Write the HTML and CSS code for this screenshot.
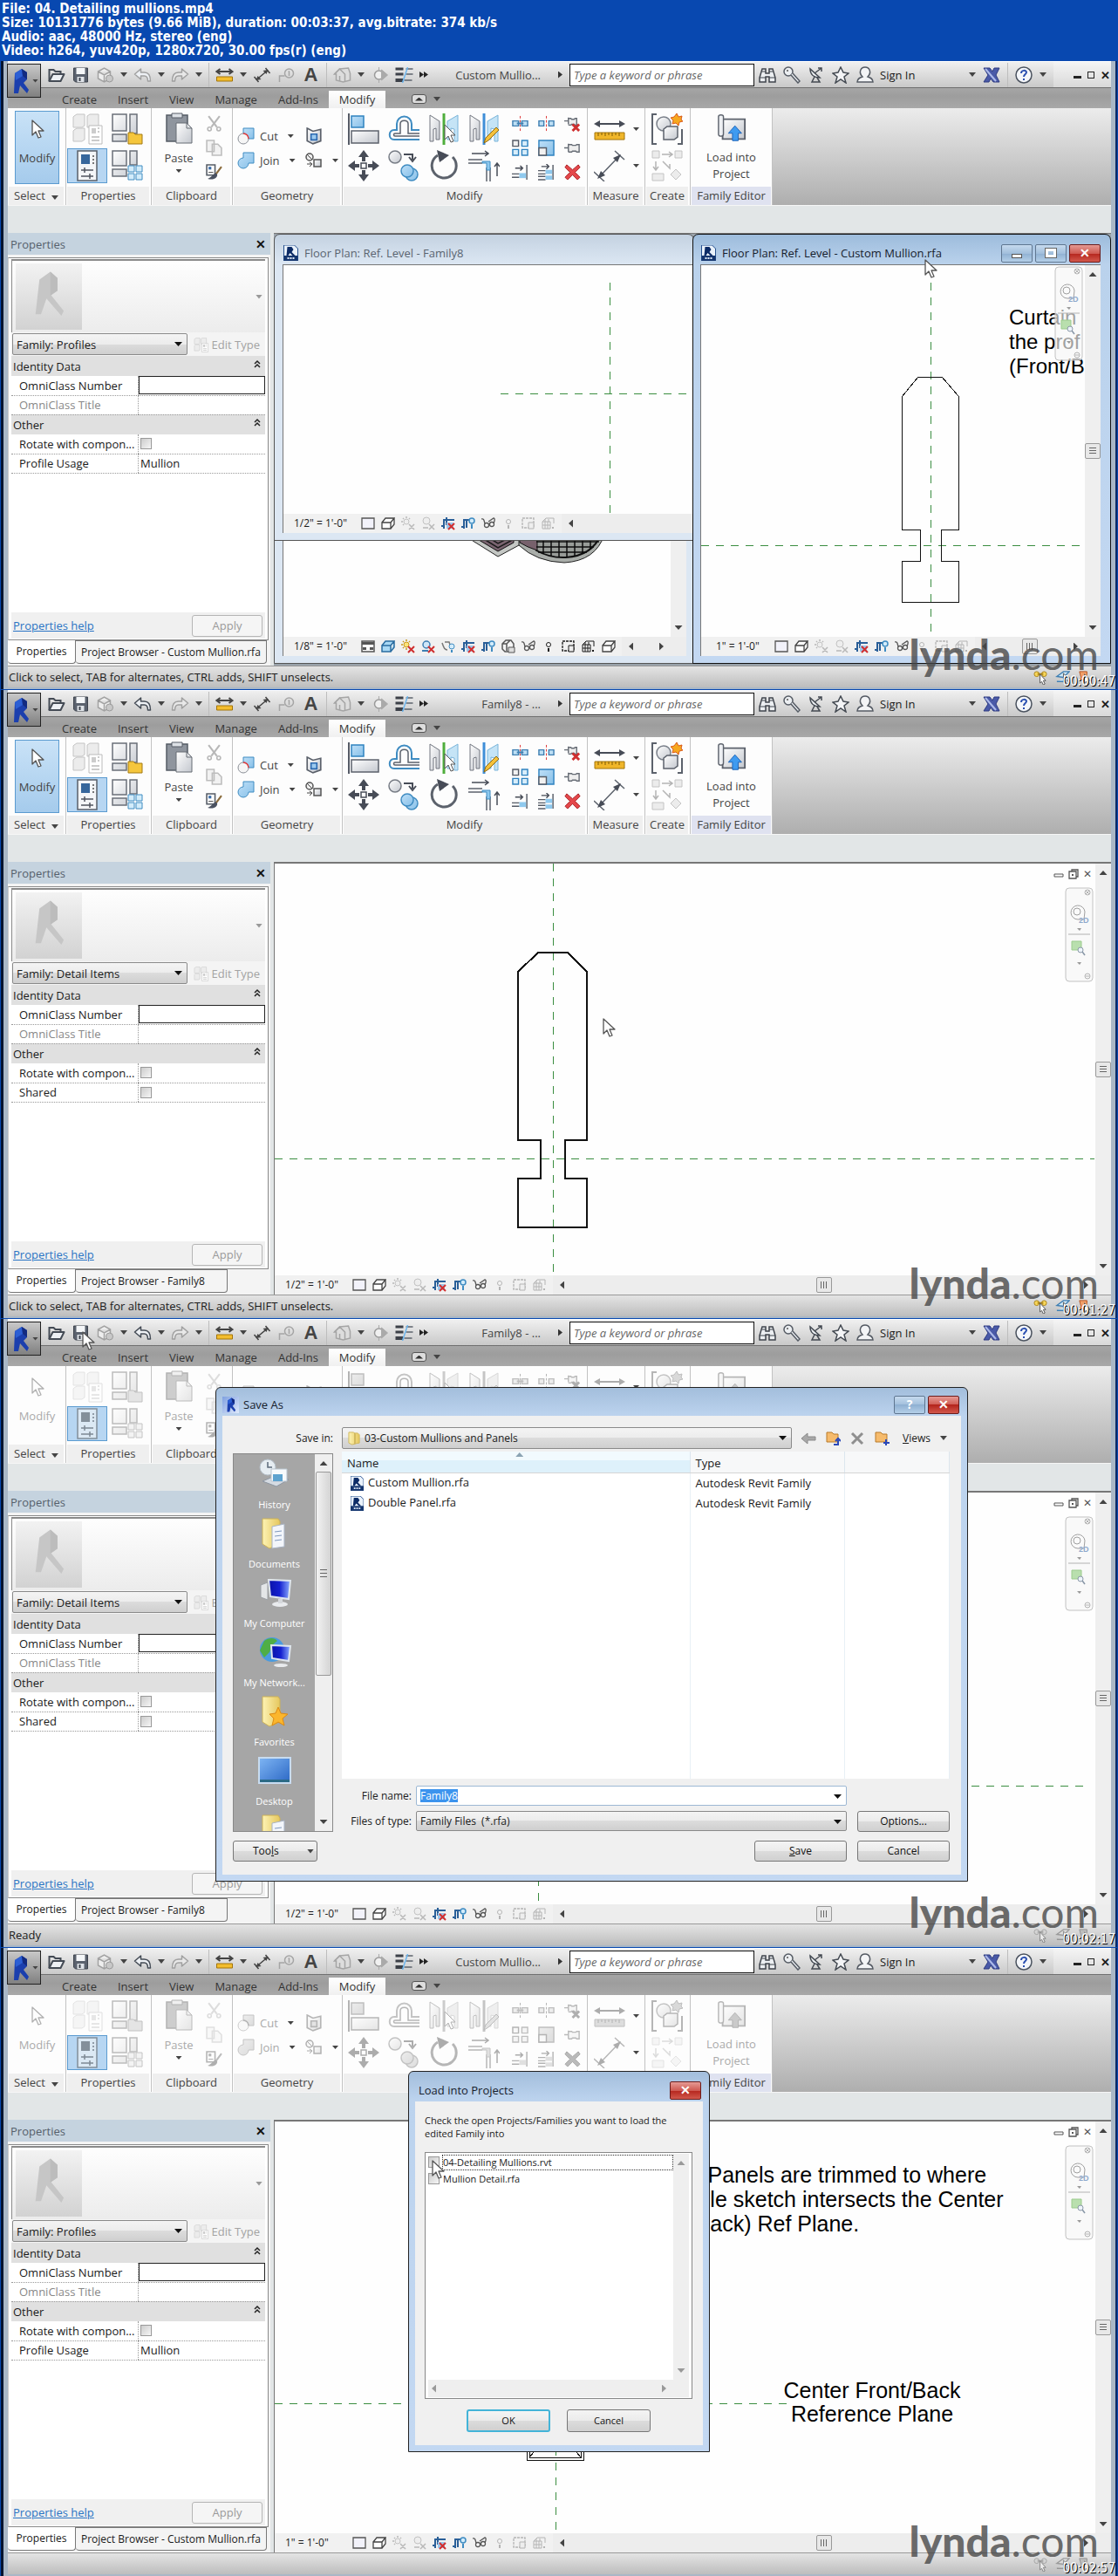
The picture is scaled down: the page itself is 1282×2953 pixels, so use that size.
FILE: index.html
```html
<!DOCTYPE html>
<html lang="en">
<head>
  <meta charset="UTF-8" />
  <meta name="viewport" content="width=device-width, initial-scale=1.0" />
  <title>04. Detailing mullions.mp4</title>
  <link rel="stylesheet" href="styles.css">
</head>
<body>
  <!-- Icon sprite -->
  <svg class="sprite" width="0" height="0" aria-hidden="true">
    <defs>
      <linearGradient id="gGray" x1="0" y1="0" x2="1" y2="1"><stop offset="0" stop-color="#fff"/><stop offset="1" stop-color="#c3c7ce"/></linearGradient>
      <linearGradient id="gBlue" x1="0" y1="0" x2="1" y2="1"><stop offset="0" stop-color="#bfe0f8"/><stop offset="1" stop-color="#86bfe8"/></linearGradient>
      <linearGradient id="gScreen" x1="0" y1="0" x2="1" y2="0"><stop offset="0" stop-color="#0a12a8"/><stop offset=".5" stop-color="#1420d0"/><stop offset="1" stop-color="#8fb0ff"/></linearGradient>
      <linearGradient id="gDesk" x1="0" y1="0" x2="1" y2="1"><stop offset="0" stop-color="#7fb6f4"/><stop offset="1" stop-color="#2a66c4"/></linearGradient>
      <linearGradient id="gFold" x1="0" y1="0" x2="1" y2="0"><stop offset="0" stop-color="#fdf3b4"/><stop offset="1" stop-color="#e5c75e"/></linearGradient>
    </defs>

    <symbol id="revit" viewBox="0 0 20 30"><path d="M3 6 11 1l6 4v8l-4 4 6 8-2 4-8-9-2 9H2z" fill="#1b3fae"/><path d="M3 6 11 1l1 8-8 5z" fill="#2c5fd4"/><path d="M11 1l6 4v8l-5-4z" fill="#122a80"/></symbol>
    <symbol id="revit-gray" viewBox="0 0 40 60"><path d="M8 14 22 4l9 8v16l-8 6 16 20-3 6-19-22-7 20H3z" fill="#c6c6c6"/><path d="M22 4l9 8v16l-9 6z" fill="#bcbcbc"/></symbol>
    <symbol id="rvt" viewBox="0 0 16 18"><path d="M0 0h12l4 4v14H0z" fill="#eaf2fb" stroke="#27518f"/><path d="M4 2h5l2 3-2 3 4 4h-3L7 9l-2 3H3z" fill="#0c2b66"/><path d="M0 12h16v6H0z" fill="#15366f"/><path d="M4 15h8" stroke="#dfe9f7" stroke-width="2" stroke-dasharray="2 1"/></symbol>

    <!-- quick access toolbar -->
    <symbol id="open" viewBox="0 0 20 18"><path d="M2 16V3h5l2 2h6v3" fill="none" stroke="#444b55" stroke-width="2"/><path d="M2 16 6 8h13l-4 8z" fill="#eef1f5" stroke="#444b55" stroke-width="2" stroke-linejoin="round"/></symbol>
    <symbol id="save" viewBox="0 0 20 18"><path d="M2 1h16v16H4l-2-2z" fill="#5b626e" stroke="#3d434d"/><path d="M5 1h10v7H5z" fill="#f4f6f8"/><path d="M6 11h8v6H6z" fill="#dfe3e8"/><path d="M8 12h2v4H8z" fill="#3d434d"/></symbol>
    <symbol id="cube" viewBox="0 0 20 18"><path d="M2 5 9 1l7 4v8l-7 4-7-4z M2 5l7 4 7-4 M9 9v8" fill="#eee" stroke="#a2a2a2" stroke-width="1.500"/><circle cx="15" cy="13" r="4" fill="#c8c8c8" stroke="#999"/></symbol>
    <symbol id="undo" viewBox="0 0 20 18"><path d="M8 2 1 8l7 6v-4h4c3 0 4 2 4 6h3c0-7-2-10-7-10H8z" fill="#eef1f5" stroke="currentColor" stroke-width="1.500" stroke-linejoin="round"/></symbol>
    <symbol id="redo" viewBox="0 0 20 18"><path d="m12 2 7 6-7 6v-4H8c-3 0-4 2-4 6H1C1 9 3 6 8 6h4z" fill="#e8e8e8" stroke="#a0a0a0" stroke-width="1.500" stroke-linejoin="round"/></symbol>
    <symbol id="measure" viewBox="0 0 20 18"><path d="M1 5h18M5 2 1 5l4 3M15 2l4 3-4 3" fill="none" stroke="#444" stroke-width="2"/><path d="M1 11h18v5H1z" fill="#f3bd2e" stroke="#a37408"/></symbol>
    <symbol id="dim" viewBox="0 0 20 18"><path d="m4 14 12-10M1 11l5 6M14 1l5 6" stroke="#444" stroke-width="1.500"/><path d="m3 15 6-1-4-4zM17 3l-6 1 4 4z" fill="#444"/></symbol>
    <symbol id="tag" viewBox="0 0 20 18"><circle cx="13" cy="7" r="5" fill="none" stroke="#a5a5a5" stroke-width="1.500"/><path d="M12 5h1v5M2 17v-7h6" fill="none" stroke="#a5a5a5" stroke-width="1.500"/></symbol>
    <symbol id="house" viewBox="0 0 20 18"><path d="M1 8 7 2l10-1 2 6v8l-8 2-8-2V8z" fill="#ddd" stroke="#a5a5a5" stroke-width="1.500"/><path d="M1 8 7 2l6 6v8M7 10v6" fill="none" stroke="#a5a5a5" stroke-width="1.500"/></symbol>
    <symbol id="section" viewBox="0 0 20 18"><circle cx="9" cy="9" r="5" fill="#f0f0f0" stroke="#9a9a9a" stroke-width="1.500"/><path d="m12 3 7 6-7 6zM9 0v4M9 14v4" fill="#aaa" stroke="#aaa"/></symbol>
    <symbol id="lines" viewBox="0 0 20 18"><path d="M0 2h9M0 8h9" stroke="#3c4048" stroke-width="3"/><path d="M0 15h9" stroke="#3c4048" stroke-width="4"/><path d="M12 2h8M12 8h8M10 15h9" stroke="#5e646e" stroke-width="1.500"/><path d="M14 0 8 18" stroke="#6cb6ef" stroke-width="1.500"/></symbol>
    <symbol id="binoculars" viewBox="0 0 20 20"><path d="M4 3h4v5h4V3h4l3 10v5h-7v-6H8v6H1v-5z" fill="#eceff2" stroke="#3f444c" stroke-width="1.500"/><path d="M1 13h7M12 13h7M4 6h4M12 6h4" stroke="#3f444c"/></symbol>
    <symbol id="key" viewBox="0 0 20 20"><circle cx="6" cy="6" r="5" fill="#eceff2" stroke="#555b64" stroke-width="1.500"/><circle cx="5" cy="5" r="1" fill="#555"/><path d="m9 10 8 9 2-2-8-9" fill="#eceff2" stroke="#555b64" stroke-width="1.500"/></symbol>
    <symbol id="dish" viewBox="0 0 20 20"><path d="M3 3c0 6 4 10 11 10z" fill="#eceff2" stroke="#444a52" stroke-width="1.500"/><path d="m8 8 8-6M12 2h4v4M8 12l-3 6h9l-3-5" fill="none" stroke="#444a52" stroke-width="1.500"/></symbol>
    <symbol id="star" viewBox="0 0 20 20"><path d="m10 1 3 6 6 1-5 4 2 7-6-4-6 4 2-7-5-4 6-1z" fill="#f3f4f6" stroke="#444a52" stroke-width="1.500"/></symbol>
    <symbol id="user" viewBox="0 0 20 20"><path d="M1 18c0-4 3-5 6-6-5-5-2-11 3-11s8 6 3 11c3 1 6 2 6 6z" fill="#f3f4f6" stroke="#555b64" stroke-width="1.500"/></symbol>
    <symbol id="exchange" viewBox="0 0 20 20"><path d="M1 2h7l3 4 2-4h6l-4 8 4 8h-7l-3-4-2 4H1l5-8z" fill="#4a5aa8" stroke="#2e3b80"/><path d="m3 3 12 14" stroke="#aebbea" stroke-width="2"/></symbol>
    <symbol id="help" viewBox="0 0 20 20"><circle cx="10" cy="10" r="9" fill="#f4f6fa" stroke="#4b535f" stroke-width="1.500"/><path d="M7 8c0-4 6-4 6-1 0 2-3 2-3 5M10 14v2" fill="none" stroke="#2a4fb0" stroke-width="2"/></symbol>

    <!-- ribbon, large -->
    <symbol id="arrow" viewBox="0 0 16 24"><path d="M2 1v17l4-4 3 7 3-1-3-7h6z" fill="#fff" stroke="#555" stroke-width="1.300" stroke-linejoin="round"/></symbol>
    <symbol id="famcat" viewBox="0 0 36 36"><g fill="#ececec" stroke="#c4c4c4"><path d="M3 3 6 1h9v13l-3 2H2V4zM18 3l3-2h10v13l-3 2H18zM3 19l3-2h9v13l-3 2H2V20z"/></g><path d="M20 14h15v21H20z" fill="#fff" stroke="#bbb"/><path d="M23 17h5v6h-5z" fill="#ccc"/><path d="M23 27h9M23 31h9M30 17h2M30 21h2" stroke="#bbb" stroke-width="1.500"/></symbol>
    <symbol id="famtypes" viewBox="0 0 36 36"><g fill="url(#gGray)" stroke="#6a6f78" stroke-width="1.500"><path d="M1 1h16v19H1zM21 1h8v22h-8zM1 24h16v8H1z"/></g><path d="M19 22h6l2 2h8v11H19z" fill="#f5c63c" stroke="#a37a12"/></symbol>
    <symbol id="props" viewBox="0 0 36 36"><path d="M7 1h22v34H7z" fill="#f4f6f8" stroke="#5a606a" stroke-width="1.500"/><path d="M11 5h10v11H11z" fill="#37679c"/><path d="M24 6h2v2h-2zM24 10h2v2h-2zM24 14h2v2h-2z" fill="#777"/><path d="M11 23h14M11 30h14M15 20v6M21 27v6" stroke="#50565f" stroke-width="1.500"/></symbol>
    <symbol id="types" viewBox="0 0 36 36"><g fill="url(#gGray)" stroke="#6a6f78" stroke-width="1.500"><path d="M1 1h16v17H1zM21 1h8v16h-8zM1 22h16v8H1z"/></g><g fill="#d3ecfa" stroke="#3f8cc2"><path d="M19 18h7v7h-7zM28 18h7v7h-7zM19 27h7v7h-7zM28 27h7v7h-7z"/></g></symbol>
    <symbol id="paste" viewBox="0 0 36 36"><path d="M4 3h24v30H4z" fill="#8f959e" stroke="#565c66" stroke-width="1.500"/><path d="M10 1h12v5H10z" fill="#dde1e6" stroke="#565c66"/><path d="M15 12h12l6 6v17H15z" fill="url(#gGray)" stroke="#666c75"/><path d="M27 12v6h6" fill="none" stroke="#666c75"/></symbol>
    <symbol id="cut" viewBox="0 0 18 18"><path d="m3 1 9 12M15 1 6 13" stroke="#b8b8b8" stroke-width="2"/><circle cx="4" cy="15" r="2" fill="none" stroke="#b8b8b8" stroke-width="1.500"/><circle cx="14" cy="15" r="2" fill="none" stroke="#b8b8b8" stroke-width="1.500"/></symbol>
    <symbol id="copy" viewBox="0 0 18 18"><path d="M1 1h8v12H1zM7 5h6l4 4v8H7z" fill="#f2f2f2" stroke="#bdbdbd" stroke-width="1.500"/></symbol>
    <symbol id="match" viewBox="0 0 18 18"><path d="M1 1h9v11H1z" fill="#fff" stroke="#555c66" stroke-width="1.500"/><path d="M3 3h3v3H3z" fill="#3a6ca8"/><path d="M3 9h5" stroke="#555"/><path d="m17 3-6 8" stroke="#8a6a3a" stroke-width="2"/><path d="M11 10c2 1 2 3 0 5s-6 2-9 1c4-1 5-5 9-6z" fill="#4a5160"/></symbol>
    <symbol id="cutgeo" viewBox="0 0 20 20"><path d="M7 1h12v12H7z" fill="url(#gBlue)" stroke="#3f8cc2"/><circle cx="7" cy="13" r="6" fill="#f6f6f6" stroke="#8a8f96"/><path d="M7 7a6 6 0 0 1 6 6" fill="none" stroke="#e03a3a" stroke-width="1.500"/></symbol>
    <symbol id="joingeo" viewBox="0 0 20 20"><path d="M7 1h12v12h-6a6 6 0 1 1-6-6z" fill="url(#gBlue)" stroke="#3f8cc2"/></symbol>
    <symbol id="cope" viewBox="0 0 18 18"><path d="M2 1l6 3 8-2v12l-8 3-6-3z" fill="url(#gGray)" stroke="#5a606a" stroke-width="1.500"/><path d="M6 7h6v6H6z" fill="#9ccbf0" stroke="#2c6ab0" stroke-width="1.500"/></symbol>
    <symbol id="split" viewBox="0 0 20 18"><circle cx="5" cy="5" r="4" fill="#eee" stroke="#555" stroke-width="1.500"/><path d="m2 2 6 6M2 13h5M5 11l3 2-3 3" fill="none" stroke="#444"/><path d="M10 8h8v8h-8z" fill="url(#gGray)" stroke="#555" stroke-width="1.500"/></symbol>
    <symbol id="align" viewBox="0 0 36 36"><path d="M1 0v36" stroke="#555b66" stroke-width="2"/><path d="M4 3h14v13H4z" fill="url(#gBlue)" stroke="#2f83c0" stroke-width="1.500"/><path d="M4 20h31v14H4z" fill="url(#gGray)" stroke="#5c626c" stroke-width="1.500"/></symbol>
    <symbol id="offset" viewBox="0 0 36 36"><path d="M36 19h-9V12a8 8 0 0 0-17 0v7H7c-7 0-7 11 0 11h29" fill="none" stroke="#3f8cc2" stroke-width="2"/><path d="M36 23H23V12c0-5-9-5-9 0v11H8c-2 0-2 3 0 3h28" fill="none" stroke="#5c626c" stroke-width="1.500"/></symbol>
    <symbol id="mirrorpick" viewBox="0 0 36 36"><path d="M2 2l11 7v21H9V17l-3 1v14H2z" fill="url(#gGray)" stroke="#70757e"/><path d="M34 2 22 9v21h4V17l4 1v14h4z" fill="#c5e4f6" stroke="#79b4da"/><path d="M18 0v36" stroke="#4fae3c" stroke-width="3"/><path d="M19 13v17l4-4 3 7 3-1-3-7h5z" fill="#fff" stroke="#555"/></symbol>
    <symbol id="mirrordraw" viewBox="0 0 36 36"><path d="M2 2l11 7v21H9V17l-3 1v14H2z" fill="url(#gGray)" stroke="#70757e"/><path d="M34 2 22 9v21h4V17l4 1v14h4z" fill="#c5e4f6" stroke="#79b4da"/><path d="M18 0v36" stroke="#3f8ed8" stroke-width="3"/><path d="m20 28 12-12 3 3-12 12-5 3z" fill="#f4c13c" stroke="#8f6a12"/></symbol>
    <symbol id="move" viewBox="0 0 36 36"><path d="m18 0 6 8h-4v5h-4V8h-4zM18 36l6-8h-4v-5h-4v5h-4zM0 18l8-6v4h5v4H8v4zM36 18l-8-6v4h-5v4h5v4z" fill="#474c57"/><path d="M15 15h6v6h-6z" fill="#fff" stroke="#474c57" stroke-width="1.500"/></symbol>
    <symbol id="copyel" viewBox="0 0 36 36"><circle cx="8" cy="8" r="7" fill="url(#gGray)" stroke="#777c85" stroke-width="1.500"/><circle cx="27" cy="28" r="7" fill="url(#gBlue)" stroke="#3f8cc2" stroke-width="1.500"/><circle cx="22" cy="24" r="7" fill="url(#gBlue)" stroke="#3f8cc2" stroke-width="1.500"/><path d="M18 5h10v6M24 8l4 5 4-5" fill="none" stroke="#474c57" stroke-width="2"/></symbol>
    <symbol id="rotate" viewBox="0 0 36 36"><path d="M28 8a14 14 0 1 1-17-2" fill="none" stroke="#5c626c" stroke-width="3"/><path d="m10 0 14 6-11 8z" fill="#474c57"/></symbol>
    <symbol id="trim" viewBox="0 0 36 36"><path d="M0 11h16M0 15h16M21 20v16M25 20v16" stroke="#5c626c" stroke-width="1.500"/><path d="M16 13h9v10h-4V15h-5z" fill="#8fc9ee" stroke="#3f8cc2"/><path d="M4 4h18M19 1l4 3-4 3M33 30V16M30 19l3-4 3 4" fill="none" stroke="#474c57" stroke-width="1.500"/></symbol>
    <symbol id="splitel" viewBox="0 0 20 20"><path d="M1 7h7v6H1zM12 7h7v6h-7z" fill="#bfe0f5" stroke="#3f7fb2" stroke-width="1.500"/><path d="M10 1v18" stroke="#d33" stroke-dasharray="3 2"/><path d="M6 10h8" stroke="#3f7fb2" stroke-width="2"/></symbol>
    <symbol id="splitgap" viewBox="0 0 20 20"><path d="M1 7h6v6H1zM13 7h6v6h-6z" fill="#bfe0f5" stroke="#3f7fb2" stroke-width="1.500"/><path d="M10 1v18" stroke="#d33" stroke-dasharray="3 2"/></symbol>
    <symbol id="unpin" viewBox="0 0 20 20"><path d="M0 7h5M5 3v8M5 4h3l1 1h3l1-1h2v8h-2l-1-1H9l-1 1H5" fill="#eee" stroke="#666c75" stroke-width="1.500"/><path d="m10 11 8 8M18 11l-8 8" stroke="#cf2f2f" stroke-width="3"/></symbol>
    <symbol id="array" viewBox="0 0 20 20"><path d="M1 1h7v7H1z" fill="#f2f2f2" stroke="#555b66" stroke-width="1.500"/><path d="M12 1h7v7h-7zM1 12h7v7H1zM12 12h7v7h-7z" fill="#d8eefb" stroke="#2f83c0" stroke-width="1.500"/></symbol>
    <symbol id="scale" viewBox="0 0 20 20"><path d="M1 1h18v18H1z" fill="url(#gBlue)" stroke="#2f83c0" stroke-width="1.500"/><path d="M1 10h9v9H1z" fill="#f2f2f2" stroke="#555b66" stroke-width="1.500"/></symbol>
    <symbol id="pin" viewBox="0 0 20 20"><path d="M0 10h5M5 5v10M5 6h4l1 1h4l1-1h3v9h-3l-1-1h-4l-1 1H5" fill="#eee" stroke="#666c75" stroke-width="1.500"/></symbol>
    <symbol id="trimone" viewBox="0 0 20 20"><path d="M0 12h9M0 16h9M18 1v18" stroke="#555b66" stroke-width="1.500"/><path d="M9 11h8v6H9z" fill="#8fc9ee"/><path d="M4 5h9M10 2l3 3-3 3" fill="none" stroke="#474c57" stroke-width="1.500"/></symbol>
    <symbol id="trimmany" viewBox="0 0 20 20"><path d="M0 8h9M0 12h9M0 15h9M0 19h9M18 1v18" stroke="#555b66" stroke-width="1.500"/><path d="M9 7h8v5H9zM9 14h8v5H9z" fill="#8fc9ee"/><path d="M4 3h9M10 0l3 3-3 3" fill="none" stroke="#474c57" stroke-width="1.500"/></symbol>
    <symbol id="delete" viewBox="0 0 20 20"><path d="m3 1 7 6 7-6 2 3-6 6 6 6-3 3-6-6-6 6-3-3 6-6-6-6z" fill="#e5484b" stroke="#a92024"/></symbol>
    <symbol id="tape" viewBox="0 0 36 36"><path d="M2 12h32" stroke="#474c57" stroke-width="2"/><path d="m0 12 7-4v8zM36 12l-7-4v8z" fill="#474c57"/><path d="M1 22h34v8H1z" fill="#f0b62a" stroke="#a37408"/><path d="M5 22v4M9 22v3M13 22v4M17 22v3M21 22v4M25 22v3M29 22v4" stroke="#7d5a06"/></symbol>
    <symbol id="bigdim" viewBox="0 0 36 36"><path d="M6 31 29 7M0 25l12 11M24 1l11 10" stroke="#5c626c" stroke-width="1.500"/><path d="m4 33 9-4-5-5zM31 5l-9 4 5 5z" fill="#474c57"/></symbol>
    <symbol id="creategroup" viewBox="0 0 36 36"><path d="M6 1H1v34h5M30 35h5V18" fill="none" stroke="#5c626c" stroke-width="2"/><circle cx="14" cy="12" r="8" fill="url(#gGray)" stroke="#7a808a" stroke-width="1.500"/><path d="m14 18 4-3h12v12l-4 3H14z" fill="url(#gGray)" stroke="#5c626c" stroke-width="1.500"/><path d="m29 0 2 4 4-1-1 4 2 2-4 1-1 4-3-3-4 1 1-4-3-3 4-1z" fill="#f6a81e" stroke="#d9591a"/></symbol>
    <symbol id="similar" viewBox="0 0 36 36"><g fill="#ececec" stroke="#c4c4c4"><path d="M1 1h8v8H1zM27 1h8v8h-8zM1 27h13v8H1zM28 22l6 6-6 6-6-6z"/></g><path d="M12 5h11M20 2l4 3-4 3M5 13v9M2 19l3 4 3-4M13 13l8 8v-5" fill="none" stroke="#b4b4b4" stroke-width="1.500"/></symbol>
    <symbol id="loadproj" viewBox="0 0 36 36"><path d="M7 6h27v24H7z" fill="url(#gGray)" stroke="#5c626c" stroke-width="2"/><path d="M2 3c0-3 6-3 6 0v21c0 3-6 4-6 0z" fill="#eef0f3" stroke="#5c626c" stroke-width="1.500"/><path d="m22 14 8 9h-4v9h-7v-9h-5z" fill="#3f9bf0" stroke="#1b62b8"/></symbol>

    <!-- view control bar -->
    <symbol id="v-detail" viewBox="0 0 16 16"><path d="M1 2h14v12H1z" fill="#f2f2fa" stroke="#555" stroke-width="1.300"/></symbol>
    <symbol id="v-sheet" viewBox="0 0 16 16"><path d="M1 2h14v12H1z" fill="#fff" stroke="#555" stroke-width="1.500"/><path d="M1 3h14v3H1zM2 9h4v3H2zM10 9h4v3h-4z" fill="#555"/></symbol>
    <symbol id="v-style" viewBox="0 0 16 16"><path d="M1 7h10v7H1zM1 7l4-5h10l-4 5M15 2v7l-4 5" fill="#fff" stroke="#444" stroke-width="1.300"/></symbol>
    <symbol id="v-styleblue" viewBox="0 0 16 16"><path d="M1 7h10v7H1zM1 7l4-5h10l-4 5M15 2v7l-4 5" fill="#a8d8f4" stroke="#2a6ca0" stroke-width="1.500"/></symbol>
    <symbol id="v-sun" viewBox="0 0 16 16"><circle cx="6" cy="6" r="3" fill="#eee" stroke="#c2c2c2"/><path d="M6 0v2M0 6h2M2 2l1 1M10 2 9 3M2 10l1-1M9 9l6 6M15 9l-6 6" stroke="#b8b8b8" stroke-width="1.500"/></symbol>
    <symbol id="v-suncolor" viewBox="0 0 16 16"><circle cx="6" cy="6" r="3" fill="#fbe27a" stroke="#c9971b"/><path d="M6 0v2M0 6h2M2 2l1 1M10 2 9 3M2 10l1-1M6 10v2" stroke="#c9971b" stroke-width="1.500"/><path d="m8 8 7 7M15 8l-7 7" stroke="#cf2f2f" stroke-width="2"/></symbol>
    <symbol id="v-shadow" viewBox="0 0 16 16"><circle cx="6" cy="5" r="4" fill="#eee" stroke="#c2c2c2"/><path d="M2 13h6M9 9l6 6M15 9l-6 6" stroke="#b8b8b8" stroke-width="1.500"/></symbol>
    <symbol id="v-shadowcolor" viewBox="0 0 16 16"><circle cx="6" cy="6" r="4" fill="#cfe6f8" stroke="#3f7fb2" stroke-width="1.500"/><path d="M1 13h7" stroke="#3f7fb2" stroke-width="2"/><path d="m8 8 7 7M15 8l-7 7" stroke="#cf2f2f" stroke-width="2"/></symbol>
    <symbol id="v-render" viewBox="0 0 16 16"><path d="M1 4c2 6 3 8 6 8M4 3h5l2 6" fill="none" stroke="#777" stroke-width="1.500"/><circle cx="12" cy="8" r="3" fill="#d4ecfa" stroke="#3f8cc2"/><path d="M11 12h2v3h-2z" fill="#3f8cc2"/></symbol>
    <symbol id="v-crop" viewBox="0 0 16 16"><path d="M0 11h3V4h12M6 1v9M3 14V8" fill="none" stroke="#2a5f98" stroke-width="2"/><path d="M6 7h8v7H6z" fill="#9cc6ea"/><path d="m8 8 7 7M15 8l-7 7" stroke="#d32f2f" stroke-width="2"/></symbol>
    <symbol id="v-croplamp" viewBox="0 0 16 16"><path d="M0 12h3V4h7M6 4v9M3 14V8" fill="none" stroke="#2a5f98" stroke-width="2"/><circle cx="12" cy="5" r="3" fill="#d4ecfa" stroke="#3f8cc2" stroke-width="1.500"/><path d="M11 9h2v5h-2z" fill="#3f8cc2"/></symbol>
    <symbol id="v-lock" viewBox="0 0 16 16"><path d="M1 5 5 1h6l3 4v9H4L1 11zM1 5h5v8M6 5l4-4" fill="#f4f4f4" stroke="#555" stroke-width="1.500"/><path d="M8 9h7v6H8z" fill="#ddd" stroke="#555"/></symbol>
    <symbol id="v-glasses" viewBox="0 0 16 16"><path d="M0 3c3-1 3 2 4 5M8 6l6-4c2 0 1 4 0 6" fill="none" stroke="#555" stroke-width="1.300"/><circle cx="6" cy="10" r="2.500" fill="#fff" stroke="#555" stroke-width="1.300"/><circle cx="12" cy="9" r="2.500" fill="#fff" stroke="#555" stroke-width="1.300"/></symbol>
    <symbol id="v-bulb" viewBox="0 0 16 16"><circle cx="8" cy="6" r="2.500" fill="#f4f4f4" stroke="currentColor"/><path d="M7 10h2v4H7z" fill="currentColor"/></symbol>
    <symbol id="v-tmp" viewBox="0 0 16 16"><path d="M1 2h13v11H1z" fill="none" stroke="currentColor" stroke-width="1.300" stroke-dasharray="3 1"/><path d="M8 7h6v7H8z" fill="#eee" stroke="currentColor"/></symbol>
    <symbol id="v-grid" viewBox="0 0 16 16"><path d="M1 6 5 2h9v6M1 6h9v8H1zM1 10h9M4 6v8M7 6v8M4 3v3M8 3v3" fill="none" stroke="currentColor"/><path d="M12 12h2v2h-2z" fill="currentColor"/></symbol>

    <!-- floating navigation bar -->
    <symbol id="nav" viewBox="0 0 33 109">
      <rect x="1" y="1" width="31" height="107" rx="4" fill="#f6f6f6" fill-opacity=".65" stroke="#c2c2c2"/>
      <g fill="none" stroke="#b2b2b2"><circle cx="26" cy="6" r="3"/><circle cx="26" cy="102" r="3"/><path d="m24 4 4 4M28 4l-4 4M24 102h4M4 54h25"/></g>
      <path d="M22 37h-7a8 8 0 1 1 8-9z" fill="#fafafa" stroke="#a0a0a0"/><circle cx="14" cy="28" r="4" fill="none" stroke="#a0a0a0"/>
      <text x="16" y="41" font-size="9" font-family="Liberation Sans, sans-serif" font-weight="bold" fill="#8fa9cc">2D</text>
      <path d="M14 47h5l-2 3zM14 86h5l-2 3z" fill="#9a9a9a"/>
      <path d="M8 62h11v10H8z" fill="#b9dfae" stroke="#9ccb8e"/><circle cx="18" cy="72" r="3" fill="#eef4fa" stroke="#8a98a8"/><path d="m20 74 3 4" stroke="#8a98a8" stroke-width="1.500"/>
    </symbol>

    <!-- status bar -->
    <symbol id="s-link" viewBox="0 0 18 18"><circle cx="4" cy="5" r="3" fill="#f7d65a" stroke="#a8821a"/><circle cx="13" cy="5" r="3" fill="#f7d65a" stroke="#a8821a"/><path d="M5 5h7" stroke="#a8821a" stroke-width="2"/><path d="M8 5v11l2-2 2 4 2-1-2-4h3z" fill="#fff" stroke="#555"/></symbol>
    <symbol id="s-under" viewBox="0 0 18 18"><path d="m2 8 8-6h7l-7 7zM2 14h8l6-6" fill="#cfe8f8" stroke="#3f7fb2" stroke-width="1.500"/><path d="M10 4v11l2-2 2 4 2-1-2-4h3z" fill="#fff" stroke="#555"/></symbol>
    <symbol id="s-pin" viewBox="0 0 18 18"><path d="M3 2h9v4l-1 3 2 3H3l2-3-1-3z" fill="#f2a06a" stroke="#b5501c"/><path d="M9 5v11l2-2 2 4 2-1-2-4h3z" fill="#fff" stroke="#555"/></symbol>

    <!-- save dialog -->
    <symbol id="p-history" viewBox="0 0 40 36"><path d="m6 26 14-6 16 4-14 8z" fill="#d5dbe2" stroke="#8d96a2"/><circle cx="12" cy="10" r="9" fill="#e6edf2" stroke="#b5c0ca"/><path d="M12 4v6h5" fill="none" stroke="#5b6a7a" stroke-width="1.500"/><path d="M16 12h18v14H16z" fill="#f7fafc" stroke="#b9c4cf"/><path d="M18 18h11v8H18z" fill="#5ea3cf"/></symbol>
    <symbol id="p-docs" viewBox="0 0 40 36"><path d="M6 1h18l2 3v26l-12 5L6 30z" fill="url(#gFold)" stroke="#cdb257"/><path d="m17 10 14-3v26l-14 2z" fill="#f3f6fb" stroke="#a9b4c4"/><path d="m20 16 8-1M20 21l8-1M20 26l8-1" stroke="#7f98bd"/></symbol>
    <symbol id="p-computer" viewBox="0 0 40 36"><path d="m4 9 8-3v20l-8-3z" fill="#e4e6e8" stroke="#9b9fa4"/><path d="m13 3 25 1-2 21-21-3z" fill="url(#gScreen)" stroke="#dfe6ee" stroke-width="2"/><ellipse cx="26" cy="31" rx="9" ry="3" fill="#e9ebee"/><path d="M24 25h5v5h-5z" fill="#d5d8dc"/></symbol>
    <symbol id="p-network" viewBox="0 0 40 36"><circle cx="17" cy="15" r="14" fill="#4a9be0"/><path d="M8 5c5-4 12-4 15 0l-6 5-3 8-6 6-5-8z" fill="#4fae46"/><path d="m16 10 22 1-2 17-19-3z" fill="url(#gScreen)" stroke="#dfe6ee" stroke-width="2"/><ellipse cx="27" cy="33" rx="8" ry="2" fill="#e9ebee"/></symbol>
    <symbol id="p-fav" viewBox="0 0 40 36"><path d="M6 1h18l2 3v26l-12 5L6 30z" fill="url(#gFold)" stroke="#cdb257"/><path d="m24 13 3 7 8 1-6 5 2 8-7-4-7 4 2-8-5-5 7-1z" fill="#fbb62c" stroke="#dd8a12"/></symbol>
    <symbol id="p-desk" viewBox="0 0 40 36"><path d="M2 3h36v29H2z" fill="url(#gDesk)" stroke="#c8dcf0" stroke-width="2"/><path d="M3 28h34v3H3z" fill="#2b6a86"/></symbol>
    <symbol id="folder" viewBox="0 0 16 18"><path d="M1 2h6l2 2v12l-4 1-4-2zM8 3h4l2 2v10l-6 1z" fill="url(#gFold)" stroke="#cfb65c"/></symbol>
    <symbol id="t-back" viewBox="0 0 18 18"><path d="m1 9 7-6v4h9v4H8v4z" fill="#a8a8a8" stroke="#8b8b8b"/></symbol>
    <symbol id="t-up" viewBox="0 0 18 18"><path d="M2 2h6l2 2h5v9H2z" fill="#f6bb6c" stroke="#b87a2a"/><path d="M10 16h5v-5M12 12l3-3 3 3" fill="none" stroke="#2a48b8" stroke-width="2"/></symbol>
    <symbol id="t-del" viewBox="0 0 18 18"><path d="m3 3 12 12M15 3 3 15" stroke="#8f8f8f" stroke-width="3"/></symbol>
    <symbol id="t-new" viewBox="0 0 18 18"><path d="M2 2h6l2 2h5v9H2z" fill="#f6bb6c" stroke="#b87a2a"/><path d="M11 14h7M14 10v7" stroke="#2a48b8" stroke-width="2"/></symbol>

    <!-- small glyphs -->
    <symbol id="chevrons" viewBox="0 0 8 10"><path d="m1 5 3-3 3 3M1 9l3-3 3 3" fill="none" stroke="#222" stroke-width="1.500"/></symbol>
    <symbol id="restore" viewBox="0 0 12 12"><path d="M4 3V1h7v8H9M1 3h8v8H1z" fill="#fff" stroke="#555" stroke-width="1.300"/><path d="M4 6h2v2H4z" fill="#555"/></symbol>
    <symbol id="minimize" viewBox="0 0 12 12"><path d="M1 6h10v3H1z" fill="#fff" stroke="#555"/></symbol>
  </svg>

  <header class="info">
    <div>File: 04. Detailing mullions.mp4</div>
    <div>Size: 10131776 bytes (9.66 MiB), duration: 00:03:37, avg.bitrate: 374 kb/s</div>
    <div>Audio: aac, 48000 Hz, stereo (eng)</div>
    <div>Video: h264, yuv420p, 1280x720, 30.00 fps(r) (eng)</div>
  </header>

  <main class="sheet">
    <!-- 1: tiled windows -->
    <section class="frame" data-title="Custom Mullio..." data-family="Family: Profiles" data-last="Profile Usage" data-value="Mullion"
      data-browser="Project Browser - Custom Mullion.rfa" data-status="Click to select, TAB for alternates, CTRL adds, SHIFT unselects." data-time="00:00:47">
      <div class="mdi">
        <article class="win win-3d">
          <div class="win-title"></div>
          <div class="view">
            <div class="canvas">
              <svg class="drawing">
                <path d="M206 10 246 35 270 22 290 10z" fill="#c4c7c4" stroke="#222"/>
                <path d="M214 10 246 29 264 19V10z" fill="#7a6470" stroke="#111"/>
                <path d="m222 10 24 15 22-12M230 10l16 10 16-8M238 10l8 5 8-5" fill="none" stroke="#1a1a1a" stroke-width="1.500"/>
                <path d="M270 10v12q20 19 52 20 36-2 46-32z" fill="#a9ada9" stroke="#222"/>
                <path d="M290 10v18q16 9 34 8 30-2 40-26z" fill="#989c98" stroke="#111" stroke-width="2"/>
                <path d="M271 10h20v18q-12-4-20-9z" fill="#77616c" stroke="#111"/>
                <path d="M290 18h72M290 24h66M292 30h56M298 10v22M307 10v25M316 10v26M325 10v26M334 10v25M343 10v22M352 10v17M360 10v8" stroke="#0c0c0c" stroke-width="1.500" fill="none"/>
              </svg>
            </div>
            <div class="vscroll"><i class="tri up"></i><i class="tri down"></i></div>
            <div class="viewbar" data-scale="1/8&quot; = 1'-0&quot;" data-mode="3d"></div>
          </div>
        </article>

        <article class="win win-family">
          <div class="win-title"><svg class="ic-file"><use href="#rvt"/></svg><h2>Floor Plan: Ref. Level - Family8</h2></div>
          <div class="view narrow">
            <div class="canvas">
              <svg class="drawing">
                <path class="ref" d="M374 20V285M249 147h222"/>
              </svg>
            </div>
            <div class="viewbar" data-scale="1/2&quot; = 1'-0&quot;" data-mode="plain"></div>
          </div>
        </article>

        <article class="win win-active">
          <div class="win-title"><svg class="ic-file"><use href="#rvt"/></svg><h2>Floor Plan: Ref. Level - Custom Mullion.rfa</h2>
            <div class="win-btns"><button aria-label="Minimize"><i class="g-min"></i></button><button aria-label="Maximize"><i class="g-max"></i></button><button class="close" aria-label="Close">✕</button></div>
          </div>
          <div class="view">
            <div class="canvas">
              <svg class="drawing">
                <path class="ref" d="M263 20V427M0 321h440"/>
                <path class="profile" d="M249 128h27l19 22v153h-20v36h20v47h-65v-47h21v-36h-21V151z"/>
                <g class="note"><text x="353" y="68">Curtain</text><text x="353" y="96">the prof</text><text x="353" y="124">(Front/B</text></g>
              </svg>
              <svg class="navbar"><use href="#nav"/></svg>
            </div>
            <div class="vscroll"><i class="tri up"></i><i class="thumb"></i><i class="tri down"></i></div>
            <div class="viewbar" data-scale="1&quot; = 1'-0&quot;" data-mode="thumb"></div>
          </div>
        </article>
      </div>
      <svg class="pointer at-title"><use href="#arrow"/></svg>
    </section>

    <!-- 2: detail item family -->
    <section class="frame" data-title="Family8 - ..." data-family="Family: Detail Items" data-last="Shared"
      data-browser="Project Browser - Family8" data-status="Click to select, TAB for alternates, CTRL adds, SHIFT unselects." data-time="00:01:27">
      <div class="view full">
        <div class="canvas">
          <svg class="drawing">
            <path class="ref" d="M319 0V472M0 338h940"/>
            <path class="profile bold" d="M302 102h34l22 22v193h-25v44h25v56h-79v-56h26v-44h-26V124z"/>
          </svg>
          <div class="doc-btns"><button aria-label="Minimize"><svg><use href="#minimize"/></svg></button><button aria-label="Restore"><svg><use href="#restore"/></svg></button><button aria-label="Close">✕</button></div>
          <svg class="navbar"><use href="#nav"/></svg>
        </div>
        <div class="vscroll"><i class="tri up"></i><i class="thumb"></i><i class="tri down"></i></div>
        <div class="viewbar" data-scale="1/2&quot; = 1'-0&quot;" data-mode="thumb"></div>
      </div>
      <svg class="pointer at-canvas"><use href="#arrow"/></svg>
    </section>

    <!-- 3: save as -->
    <section class="frame is-disabled" data-title="Family8 - ..." data-family="Family: Detail Items" data-last="Shared"
      data-browser="Project Browser - Family8" data-status="Ready" data-time="00:02:17">
      <div class="view full">
        <div class="canvas">
          <svg class="drawing">
            <path class="ref" d="M302 0V472M0 336h935"/>
          </svg>
          <div class="doc-btns"><button aria-label="Minimize"><svg><use href="#minimize"/></svg></button><button aria-label="Restore"><svg><use href="#restore"/></svg></button><button aria-label="Close">✕</button></div>
          <svg class="navbar"><use href="#nav"/></svg>
        </div>
        <div class="vscroll"><i class="tri up"></i><i class="thumb"></i><i class="tri down"></i></div>
        <div class="viewbar" data-scale="1/2&quot; = 1'-0&quot;" data-mode="thumb"></div>
      </div>

      <form class="dialog save-as">
        <div class="dlg-title"><span class="dlg-icon"><svg><use href="#revit"/></svg></span><h2>Save As</h2>
          <div class="win-btns"><button type="button" aria-label="Help">?</button><button type="button" class="close" aria-label="Close">✕</button></div>
        </div>
        <div class="dlg-body">
          <label class="lbl" for="saveIn">Save in:</label>
          <div class="save-in">
            <span class="combo wide"><svg><use href="#folder"/></svg><select id="saveIn"><option>03-Custom Mullions and Panels</option></select></span>
            <button type="button" class="plain" aria-label="Back"><svg><use href="#t-back"/></svg></button>
            <button type="button" class="plain" aria-label="Up one level"><svg><use href="#t-up"/></svg></button>
            <button type="button" class="plain" aria-label="Delete"><svg><use href="#t-del"/></svg></button>
            <button type="button" class="plain" aria-label="New folder"><svg><use href="#t-new"/></svg></button>
            <button type="button" class="plain views"><span><u>V</u>iews</span><i class="caret"></i></button>
          </div>
          <div class="places">
            <ul>
              <li><svg><use href="#p-history"/></svg>History</li>
              <li><svg><use href="#p-docs"/></svg>Documents</li>
              <li><svg><use href="#p-computer"/></svg>My Computer</li>
              <li><svg><use href="#p-network"/></svg>My Network...</li>
              <li><svg><use href="#p-fav"/></svg>Favorites</li>
              <li><svg><use href="#p-desk"/></svg>Desktop</li>
              <li><svg><use href="#p-docs"/></svg></li>
            </ul>
            <div class="vscroll"><i class="tri up"></i><i class="longthumb"></i><i class="tri down"></i></div>
          </div>
          <table class="files">
            <thead><tr><th class="sorted">Name<i class="tri up"></i></th><th>Type</th><th></th></tr></thead>
            <tbody>
              <tr><td><svg><use href="#rvt"/></svg>Custom Mullion.rfa</td><td>Autodesk Revit Family</td><td></td></tr>
              <tr><td><svg><use href="#rvt"/></svg>Double Panel.rfa</td><td>Autodesk Revit Family</td><td></td></tr>
              <tr class="rest"><td></td><td></td><td></td></tr>
            </tbody>
          </table>
          <div class="fields">
            <label for="fileName">File name:</label>
            <span class="combo edit"><input id="fileName" value="Family8"></span>
            <span></span>
            <label for="fileType">Files of type:</label>
            <span class="combo"><select id="fileType"><option>Family Files&nbsp; (*.rfa)</option></select></span>
            <button type="button" class="btn">Options...</button>
          </div>
          <button type="button" class="btn tools"><span>Too<u>l</u>s</span><i class="caret"></i></button>
          <div class="actions"><button type="button" class="btn"><u>S</u>ave</button><button type="button" class="btn">Cancel</button></div>
        </div>
      </form>
      <svg class="pointer at-save"><use href="#arrow"/></svg>
    </section>

    <!-- 4: load into projects -->
    <section class="frame is-disabled" data-title="Custom Mullio..." data-family="Family: Profiles" data-last="Profile Usage" data-value="Mullion"
      data-browser="Project Browser - Custom Mullion.rfa" data-status="" data-time="00:02:57">
      <div class="view full">
        <div class="canvas">
          <svg class="drawing">
            <path class="ref" d="M322 0V472M0 323h588"/>
            <path class="profile" d="M289 370v18h65v-18M292 370v15h59v-15M292 385l11-13M351 385l-11-13"/>
            <g class="note">
              <text x="409" y="70">Curtain Panels are trimmed to where</text>
              <text x="409" y="98">the profile sketch intersects the Center</text>
              <text x="409" y="126">(Front/Back) Ref Plane.</text>
              <text x="685" y="317" text-anchor="middle">Center Front/Back</text>
              <text x="685" y="344" text-anchor="middle">Reference Plane</text>
            </g>
          </svg>
          <div class="doc-btns"><button aria-label="Minimize"><svg><use href="#minimize"/></svg></button><button aria-label="Restore"><svg><use href="#restore"/></svg></button><button aria-label="Close">✕</button></div>
          <svg class="navbar"><use href="#nav"/></svg>
        </div>
        <div class="vscroll"><i class="tri up"></i><i class="thumb"></i><i class="tri down"></i></div>
        <div class="viewbar" data-scale="1&quot; = 1'-0&quot;" data-mode="thumb"></div>
      </div>

      <form class="dialog load-into">
        <div class="dlg-title"><h2>Load into Projects</h2>
          <div class="win-btns"><button type="button" class="close" aria-label="Close">✕</button></div>
        </div>
        <div class="dlg-body">
          <p>Check the open Projects/Families you want to load the edited Family into</p>
          <div class="checklist">
            <div class="items">
              <label><input type="checkbox"><span class="focused">04-Detailing Mullions.rvt</span></label>
              <label><input type="checkbox"><span>Mullion Detail.rfa</span></label>
            </div>
            <div class="vscroll"><i class="tri up"></i><i class="tri down"></i></div>
            <div class="hscroll"><i class="tri left"></i><i class="tri right"></i></div>
          </div>
          <div class="actions"><button type="button" class="btn default">OK</button><button type="button" class="btn">Cancel</button></div>
        </div>
      </form>
      <svg class="pointer at-check"><use href="#arrow"/></svg>
    </section>
  </main>

  <script src="script.js"></script>
</body>
</html>
```
FILE: styles.css
```css
* {
  box-sizing: border-box;
}
body {
  margin: 0;
  background-color: #0848b0;
  color: #1a1a1a;
  font-family: "Open Sans", "Noto Sans", sans-serif;
  font-size: 13px;
  line-height: 16px;
}
button, input, select {
  font: inherit;
  color: inherit;
  margin: 0;
  padding: 0;
  border: 0;
  background: none;
}
h2, p, ul {
  margin: 0;
  padding: 0;
  font-size: inherit;
  font-weight: normal;
}
i {
  display: block;
}
svg {
  display: block;
  flex: none;
}
.sprite {
  position: absolute;
}

/* file info */
.info {
  height: 70px;
  padding: 2px 2px 0;
  color: #fff;
  font: bold 15px/16px "DejaVu Sans Condensed", "Open Sans", sans-serif;
  white-space: nowrap;
}
.sheet {
  display: flex;
  flex-direction: column;
  gap: 1px;
  padding: 0 1px;
}
.frame {
  position: relative;
  overflow: hidden;
  border-left: 3px solid #03142f;
  border-right: 2px solid #0b2a66;
}
.app {
  display: flex;
  flex-direction: column;
  border: solid #a9b7c6;
  border-width: 0 5px 2px;
  background-color: #e2e6e7;
}

/* quick access toolbar */
.qat {
  display: flex;
  align-items: center;
  height: 31px;
  padding-left: 45px;
  border-top: 1px solid #fff;
  border-bottom: 1px solid #6f6f6f;
  background: linear-gradient(#f0f0f0, #c9c9c9);
}
.qat-tools {
  display: flex;
  align-items: center;
  gap: 7px;
}
.tool svg {
  width: 21px;
  height: 18px;
  color: #444b55;
}
.tool.off svg {
  color: #a0a0a0;
}
.tool-a {
  width: 21px;
  font: bold 22px/20px "Liberation Sans", sans-serif;
  color: #444;
}
.caret {
  width: 8px;
  height: 5px;
  background: #444;
  clip-path: polygon(0 0, 100% 0, 50% 100%);
}
.sep {
  width: 1px;
  height: 28px;
  background: #bdbdbd;
}
.more {
  width: 10px;
  height: 7px;
  background: #222;
  clip-path: polygon(0 0, 50% 50%, 50% 0, 100% 50%, 50% 100%, 50% 50%, 0 100%);
}
.doc-title {
  flex: 1;
  padding-right: 20px;
  text-align: right;
  color: #444;
}
.search-arrow {
  width: 5px;
  height: 8px;
  margin-right: 8px;
  background: #333;
  clip-path: polygon(0 0, 100% 50%, 0 100%);
}
.search {
  width: 212px;
  height: 26px;
  padding: 0 4px;
  border: 1px solid #111;
  background: #fff;
  font-style: italic;
}
.search::placeholder {
  color: #666;
}
.account {
  display: flex;
  align-items: center;
  gap: 8px;
  padding-left: 5px;
}
.account svg {
  width: 20px;
  height: 20px;
}
.sign-in {
  width: 94px;
  margin-left: -1px;
  text-align: left;
}
.win-ctl {
  display: flex;
  align-items: center;
  gap: 7px;
  width: 66px;
  height: 29px;
  padding-left: 23px;
  background: rgba(255, 255, 255, .3);
  font-weight: bold;
}
.win-ctl i {
  width: 9px;
  height: 3px;
  margin-top: 5px;
  background: #222;
}
.win-ctl i.sq {
  width: 8px;
  height: 8px;
  margin: 0;
  border: 1px solid #222;
  background: none;
}
.app-btn {
  position: absolute;
  left: 4px;
  top: 3px;
  display: flex;
  align-items: center;
  gap: 3px;
  width: 39px;
  height: 39px;
  padding-left: 5px;
  border: 1px solid #222;
  background: linear-gradient(#c8c8c8, #808080);
}
.app-btn svg {
  width: 20px;
  height: 30px;
}
.app-btn .caret {
  width: 7px;
  height: 4px;
}

/* tabs */
.tabs {
  display: flex;
  align-items: flex-end;
  height: 23px;
  padding-left: 50px;
  background: linear-gradient(#a6a6a6, #9d9d9d 40%, #a8a8a8);
  color: #333;
}
.tabs button {
  height: 20px;
  padding: 0 12px;
}
.tabs button.active {
  width: 65px;
  padding: 0;
  background: linear-gradient(#fff, #f0f0f0);
}
.tabs .collapse {
  width: 17px;
  height: 11px;
  margin: 0 8px 5px 30px;
  padding: 0 3px;
  border: 1px solid #555;
  border-radius: 3px;
  background: #ddd;
}
.collapse i {
  height: 4px;
  background: #333;
  clip-path: polygon(50% 0, 100% 100%, 0 100%);
}
.tabs > .caret {
  margin-bottom: 8px;
}

/* ribbon */
.ribbon {
  display: flex;
  height: 112px;
  border-bottom: 1px solid #f6f6f6;
  background: linear-gradient(#ececec, #aeaeae);
}
.panel {
  display: flex;
  flex-direction: column;
  border-right: 1px solid #c2c2c2;
  background: #fdfdfd;
  color: #444;
}
.panel h3 {
  height: 21px;
  margin: 0 2px 0 1px;
  background: #efefef;
  font-size: 13px;
  font-weight: normal;
  line-height: 21px;
  text-align: center;
  white-space: nowrap;
}
.panel h3 .caret {
  display: inline-block;
  margin-left: 7px;
}
.panel-body {
  display: flex;
  height: 90px;
}
.p-select { width: 67px; }
.p-props { width: 98px; }
.p-clip { width: 93px; }
.p-geo { width: 126px; }
.p-mod { width: 281px; }
.p-meas { width: 66px; }
.p-create { width: 52px; }
.p-family { width: 94px; }
.panel.p-family h3 {
  margin: 0 1px;
  background: #dfe2f0;
}
.big-modify {
  display: flex;
  flex-direction: column;
  align-items: center;
  gap: 12px;
  width: 51px;
  height: 84px;
  margin: 3px 0 0 8px;
  padding-top: 9px;
  border: 1px solid #5b9bd0;
  background: linear-gradient(#c9e2f7, #a5cbec);
}
.big-modify svg {
  width: 16px;
  height: 24px;
}
.grid2 {
  display: grid;
  grid-auto-flow: row;
  grid-template-rows: 42px 42px;
  padding: 3px 0 0 1px;
  place-items: center;
}
.p-props .grid2 { grid-template-columns: 46px 46px; }
.p-mod .grid2 { grid-template-columns: repeat(4, 46px); }
.p-create .grid2 { grid-template-columns: 47px; }
.grid2 svg {
  width: 36px;
  height: 36px;
}
.pressed {
  padding: 1px 4px;
  border: 1px solid #5b9bd0;
  background: #b7d6f2;
}
.small {
  display: grid;
  grid-template-rows: repeat(3, 28px);
  place-items: center;
  padding-top: 3px;
}
.small svg {
  width: 19px;
  height: 19px;
}
.p-mod .small {
  grid-template-columns: repeat(3, 30px);
  margin-left: 3px;
}
.paste {
  display: flex;
  flex-direction: column;
  align-items: center;
  width: 62px;
  padding-top: 5px;
}
.paste svg {
  width: 36px;
  height: 36px;
}
.paste .caret {
  width: 7px;
  height: 4px;
  margin-top: 5px;
}
.paste span {
  margin-top: 8px;
}
.geo {
  display: grid;
  grid-template-columns: 78px 40px;
  grid-template-rows: 28px 28px;
  align-items: center;
  padding: 18px 0 0 5px;
}
.geo button {
  display: flex;
  align-items: center;
  gap: 6px;
}
.geo svg {
  width: 20px;
  height: 20px;
}
.geo .caret {
  width: 7px;
  height: 4px;
  margin-left: 5px;
}
.meas {
  display: grid;
  grid-template-rows: 42px 42px;
  padding: 3px 0 0 7px;
}
.meas button {
  display: flex;
  align-items: center;
  gap: 9px;
}
.meas svg {
  width: 36px;
  height: 36px;
}
.meas .caret {
  width: 7px;
  height: 4px;
}
.load {
  display: flex;
  flex-direction: column;
  align-items: center;
  gap: 6px;
  width: 93px;
  padding-top: 7px;
  line-height: 19px;
}
.load svg {
  width: 34px;
  height: 34px;
}
.is-disabled .panel svg {
  filter: grayscale(1);
  opacity: .45;
}
.is-disabled .pressed svg {
  opacity: .6;
}
.is-disabled .panel-body {
  color: #aaa;
}
.is-disabled .big-modify {
  border-color: transparent;
  background: none;
}

/* work area */
.work {
  display: grid;
  grid-template-columns: 301px minmax(0, 1fr);
  gap: 4px;
  height: 496px;
  margin-top: 31px;
}
.palette {
  display: flex;
  flex-direction: column;
  background: #f4f4f4;
}
.palette-head {
  display: flex;
  justify-content: space-between;
  align-items: center;
  height: 25px;
  padding: 0 5px 0 3px;
  background: #c5d3df;
  color: #555f6b;
}
.palette-head button {
  color: #111;
  font-size: 14px;
  font-weight: bold;
}
.palette-box {
  display: flex;
  flex-direction: column;
  flex: 1;
  margin: 3px 2px 0 0;
  padding: 1px 3px;
  border: 1px solid #8a8a8a;
  border-left-color: #ccc;
  background: #fff;
}
.preview {
  display: flex;
  justify-content: space-between;
  align-items: center;
  height: 84px;
  padding: 0 3px 0 4px;
  border: 1px solid #8a8a8a;
  border-width: 2px 0 0 1px;
  background: linear-gradient(#fefefe, #ececec);
}
.preview .thumbnail {
  width: 76px;
  height: 76px;
  padding: 6px 16px 16px;
  background: linear-gradient(#f2f2f2, #d2d2d2);
}
.preview .thumbnail svg {
  width: 44px;
  height: 54px;
}
.preview .caret {
  background: #999;
}
.type-row {
  display: flex;
  justify-content: space-between;
  height: 27px;
  padding: 1px 6px 0 1px;
  background: #f4f4f4;
}
.combo {
  position: relative;
  display: flex;
  align-items: center;
  height: 25px;
  border: 1px solid #8a8a8a;
  border-radius: 2px;
  background: linear-gradient(#f4f4f4, #ececec 50%, #dcdcdc 50%, #cfcfcf);
}
.combo select {
  flex: 1;
  height: 100%;
  padding: 0 4px;
  appearance: none;
  outline: 0;
}
.combo::after {
  content: "";
  position: absolute;
  right: 5px;
  top: 9px;
  width: 9px;
  height: 5px;
  background: #111;
  clip-path: polygon(0 0, 100% 0, 50% 100%);
  pointer-events: none;
}
.type-row .combo {
  width: 201px;
}
.edit-type {
  display: flex;
  align-items: center;
  gap: 4px;
  color: #a3a3a3;
}
.edit-type svg {
  width: 17px;
  height: 17px;
}
.props {
  width: 100%;
  border-collapse: collapse;
  table-layout: fixed;
}
.props th, .props td {
  height: 22px;
  padding: 0;
  border-bottom: 1px dotted #999;
  font-weight: normal;
  text-align: left;
  white-space: nowrap;
}
.props th {
  padding-left: 9px;
}
.props td {
  border-left: 1px dotted #999;
  padding-left: 2px;
}
.props .group th {
  height: 23px;
  padding-left: 2px;
  border: 0;
  background: #e0e0e0;
}
.group svg {
  float: right;
  width: 8px;
  height: 10px;
  margin-right: 5px;
}
.props .dim {
  color: #888;
}
.props input[type="text"] {
  display: block;
  width: 100%;
  height: 21px;
  border: 1px solid #222;
}
.props td.focus {
  padding: 0;
}
input[type="checkbox"] {
  appearance: none;
  display: block;
  width: 13px;
  height: 13px;
  border: 1px solid #999;
  background: linear-gradient(135deg, #ccc, #f6f6f6);
}
.palette-foot {
  display: flex;
  justify-content: space-between;
  align-items: center;
  height: 30px;
  margin-top: auto;
  padding: 0 3px 0 2px;
  background: #f0f0f0;
}
.palette-foot a {
  color: #2a74c4;
}
.palette-foot button {
  width: 81px;
  height: 25px;
  border: 1px solid #b5b5b5;
  border-radius: 3px;
  background: #f5f5f5;
  color: #9a9a9a;
}
.palette-tabs {
  display: flex;
  height: 27px;
  margin-bottom: 2px;
  font-size: 12px;
}
.palette-tabs button {
  height: 27px;
  padding: 0 6px;
  border: 1px solid #777;
  border-width: 1px 1px 1px 0;
  border-radius: 0 0 4px 4px;
  background: #f4f4f4;
  white-space: nowrap;
}
.palette-tabs button:first-child {
  width: 78px;
  border-top: 0;
  background: #fff;
}
.palette-tabs button:last-child {
  min-width: 174px;
  text-align: left;
}

/* views */
.view {
  position: relative;
  display: grid;
  grid-template-columns: minmax(0, 1fr) 18px;
  grid-template-rows: minmax(0, 1fr) 22px;
  background: #fff;
}
.view.full {
  border: solid #777;
  border-width: 2px 0 0 1px;
}
.canvas {
  position: relative;
  overflow: hidden;
  background: #fefefe;
}
.narrow .canvas {
  grid-column: 1 / 3;
}
.drawing {
  width: 100%;
  height: 100%;
}
.ref {
  fill: none;
  stroke: #3a8d40;
  stroke-dasharray: 9 8;
  shape-rendering: crispEdges;
}
.profile {
  fill: none;
  stroke: #111;
  shape-rendering: crispEdges;
}
.profile.bold {
  stroke-width: 2;
}
.note {
  font: 25px "Liberation Sans", sans-serif;
  fill: #000;
}
.win .note {
  font-size: 24px;
}
.vscroll {
  position: relative;
  display: flex;
  flex-direction: column;
  justify-content: space-between;
  align-items: center;
  padding: 8px 0;
  background: #efefef;
}
.tri {
  width: 9px;
  height: 5px;
  background: #444;
}
.tri.up {
  clip-path: polygon(50% 0, 100% 100%, 0 100%);
}
.tri.down {
  clip-path: polygon(0 0, 100% 0, 50% 100%);
}
.tri.left, .tri.right {
  width: 5px;
  height: 9px;
  clip-path: polygon(100% 0, 100% 100%, 0 50%);
}
.tri.right {
  clip-path: polygon(0 0, 100% 50%, 0 100%);
}
.thumb {
  width: 18px;
  height: 18px;
  border: 1px solid #999;
  border-radius: 2px;
  background: repeating-linear-gradient(#666 0 1px, transparent 1px 3px) center / 8px 8px no-repeat, #e8e8e8;
}
.viewbar {
  grid-column: 1 / 3;
  display: flex;
  align-items: center;
  gap: 7px;
  padding-left: 12px;
  background: #f1f1f1;
  font-size: 12px;
  white-space: nowrap;
}
.viewbar > svg {
  width: 16px;
  height: 16px;
}
.viewbar b {
  min-width: 64px;
  margin-right: 6px;
  font-weight: normal;
}
.win-active .viewbar b {
  min-width: 54px;
  margin-left: 5px;
}
.hbar {
  flex: 1;
  display: flex;
  justify-content: space-between;
  align-items: center;
  align-self: stretch;
  padding: 0 26px 0 8px;
  background: #ededed;
}
.hbar .thumb {
  background: repeating-linear-gradient(90deg, #666 0 1px, transparent 1px 3px) center / 8px 8px no-repeat, #e8e8e8;
}
.faded {
  color: #b4b4b4;
}
.doc-btns {
  position: absolute;
  right: 4px;
  top: 4px;
  display: flex;
  align-items: center;
  gap: 5px;
  color: #555;
  font-size: 12px;
}
.doc-btns svg {
  width: 12px;
  height: 12px;
}
.navbar {
  position: absolute;
  right: 2px;
  top: 27px;
  width: 33px;
  height: 109px;
}
.win .navbar {
  top: 1px;
}

/* child windows */
.mdi {
  position: relative;
  overflow: hidden;
  border-top: 1px solid #777;
  background: #9aa3ab;
}
.win {
  position: absolute;
  left: 0;
  top: 0;
  display: flex;
  flex-direction: column;
  width: 482px;
  height: 352px;
  padding: 0 8px 8px 9px;
  border: 1px solid #555;
  border-radius: 7px 7px 0 0;
  background: linear-gradient(#c4d2e1, #dce7f3 34px);
}
.win-3d {
  top: 299px;
  height: 194px;
}
.win-family {
  padding-right: 0;
}
.win-active {
  left: 480px;
  right: 0;
  width: auto;
  height: 493px;
  padding: 0 11px 8px 8px;
  border-color: #111;
  background: linear-gradient(#9dbcdc, #bad2ec 34px, #c3d8f2);
}
.win-title {
  display: flex;
  flex: none;
  align-items: center;
  gap: 7px;
  height: 34px;
  padding: 8px 0 0 1px;
  color: #5a6470;
}
.win-active .win-title {
  color: #16202c;
}
.win-title .ic-file {
  width: 17px;
  height: 18px;
}
.win .view {
  flex: 1;
  min-height: 0;
  border-left: 1px solid #777;
  border-top: 1px solid #777;
}
.win .canvas {
  min-height: 0;
}
.win-btns {
  display: flex;
  gap: 3px;
  margin-left: auto;
}
.win-btns button {
  display: grid;
  place-items: center;
  width: 36px;
  height: 21px;
  border: 1px solid #5f7690;
  border-radius: 2px;
  background: linear-gradient(#c6daee, #a2bfdc 50%, #8fb0d2 50%, #b4cfe8);
  color: #fff;
  font-size: 14px;
  font-weight: bold;
}
.win-btns button.close {
  border-color: #6b1c1c;
  background: linear-gradient(#e59a94, #cf5a52 50%, #b4241c 50%, #d2584c);
}
.win-btns .g-min {
  width: 12px;
  height: 5px;
  margin-top: 6px;
  border: 1px solid #555;
  background: #fff;
}
.win-btns .g-max {
  width: 12px;
  height: 10px;
  border: 3px solid #fff;
  outline: 1px solid #666;
}

/* status bar */
.status {
  display: flex;
  align-items: center;
  height: 25px;
  padding-left: 1px;
  border-top: 1px solid #999;
  background: linear-gradient(#e4e4e4, #bdbdbd);
}
.status span {
  flex: 1;
}
.status svg {
  width: 17px;
  height: 17px;
  margin-right: 8px;
}
.status svg:last-child {
  margin-right: 22px;
}
.is-disabled .status svg {
  filter: grayscale(1);
  opacity: .6;
}
.watermark {
  position: absolute;
  right: 19px;
  top: 656px;
  color: rgba(70, 70, 70, .8);
  font: 48px/48px Lato, sans-serif;
}
.watermark b {
  font-weight: 900;
}
.time {
  position: absolute;
  right: 0;
  top: 703px;
  color: #fff;
  font: 15px/17px "DejaVu Sans Condensed", sans-serif;
  text-shadow: 1px 1px 0 #000;
}
.pointer {
  position: absolute;
  width: 16px;
  height: 24px;
}
.at-title { left: 1055px; top: 227px; }
.at-canvas { left: 686px; top: 376px; }
.at-save { left: 89px; top: 14px; }
.at-check { left: 490px; top: 243px; }

/* dialogs */
.dialog {
  position: absolute;
  display: flex;
  flex-direction: column;
  padding: 0 7px 7px;
  border: 1px solid #222;
  border-radius: 6px 6px 0 0;
  background: linear-gradient(#a3bedc, #bcd3ee 32px, #c3d8f2);
  font-size: 12px;
}
.dlg-title {
  display: flex;
  align-items: center;
  gap: 5px;
  height: 32px;
  padding-top: 6px;
  font-size: 13px;
  color: #16202c;
}
.dlg-icon {
  display: grid;
  place-items: center;
  width: 19px;
  height: 19px;
  background: linear-gradient(135deg, #7fa0e0, #dfe9fb);
}
.dlg-icon svg {
  width: 12px;
  height: 17px;
}
.dlg-body {
  flex: 1;
  background: #f0f0f0;
}
.btn {
  height: 24px;
  border: 1px solid #777;
  border-radius: 3px;
  background: linear-gradient(#f4f4f4, #ebebeb 50%, #dcdcdc 50%, #d0d0d0);
  color: #111;
}
.btn.default {
  border: 2px solid #43b4d8;
}
.save-as {
  left: 243px;
  top: 78px;
  width: 863px;
  height: 567px;
}
.save-as .win-btns {
  margin-right: 2px;
}
.save-as .dlg-body {
  display: grid;
  grid-template-columns: 115px minmax(0, 1fr);
  grid-template-rows: 25px 378px 60px 34px;
  column-gap: 10px;
  padding: 13px 13px 0 12px;
}
.lbl {
  align-self: center;
  text-align: right;
}
.save-in {
  display: flex;
  align-items: center;
  gap: 10px;
}
.save-in .wide {
  width: 516px;
  padding-left: 6px;
}
.combo svg {
  width: 15px;
  height: 17px;
}
.plain svg {
  width: 18px;
  height: 18px;
}
.views {
  display: flex;
  align-items: center;
  gap: 11px;
  margin-left: 5px;
}
.places {
  grid-row: 2 / 4;
  display: flex;
  margin-top: 5px;
  height: 434px;
  border: 1px solid #888;
  overflow: hidden;
}
.places ul {
  flex: 1;
  background: #a6a6a6;
  color: #fff;
  font-size: 11px;
  list-style: none;
  text-align: center;
}
.places li {
  height: 68px;
  padding-top: 5px;
}
.places li svg {
  width: 40px;
  height: 36px;
  margin: 0 auto 9px;
}
.places .vscroll {
  width: 20px;
}
.longthumb {
  position: absolute;
  top: 20px;
  width: 18px;
  height: 234px;
  border: 1px solid #999;
  border-radius: 2px;
  background: repeating-linear-gradient(#666 0 1px, transparent 1px 4px) center / 8px 10px no-repeat, linear-gradient(90deg, #f2f2f2, #d4d4d4);
}
.files {
  width: 100%;
  height: 375px;
  margin-top: 3px;
  border-collapse: collapse;
  table-layout: fixed;
  background: #fff;
  font-size: 13px;
}
.files th {
  position: relative;
  height: 24px;
  padding: 2px 6px 0;
  border-bottom: 1px solid #d5d5d5;
  border-right: 1px solid #dce6ee;
  background: #f7f8f9;
  font-weight: normal;
  text-align: left;
}
.files th .tri {
  position: absolute;
  left: 50%;
  top: 1px;
  background: #8ba3b3;
}
.files th.sorted {
  width: 399px;
  background: linear-gradient(#f2fafe 40%, #def1fb 40%);
}
.files th:nth-child(2) {
  width: 177px;
}
.files td {
  height: 23px;
  padding: 1px 6px 0;
  border-right: 1px solid #e8f0f6;
}
.files td svg {
  display: inline-block;
  width: 15px;
  height: 17px;
  margin: 0 5px 0 4px;
  vertical-align: middle;
}
.files .rest td {
  height: auto;
}
.fields {
  display: grid;
  grid-template-columns: 80px 494px 1fr;
  gap: 6px 5px;
  align-items: start;
  padding-top: 8px;
}
.fields label {
  align-self: center;
  text-align: right;
}
.fields .combo {
  height: 23px;
}
.fields .btn {
  margin-left: 7px;
}
.fields .edit {
  padding: 0 4px;
  border-color: #9db8d4;
  background: #fff;
}
.fields .edit input {
  width: 43px;
  height: 15px;
  background: #3c94ee;
  color: #fff;
  line-height: 15px;
}
.tools {
  display: flex;
  align-items: center;
  justify-content: space-between;
  width: 97px;
  margin-top: 11px;
  padding: 0 3px 0 22px;
}
.actions {
  display: flex;
  justify-content: flex-end;
  gap: 12px;
}
.save-as .actions {
  padding-top: 11px;
}
.actions .btn, .fields .btn {
  width: 106px;
}
.load-into {
  left: 464px;
  top: 141px;
  width: 346px;
  height: 437px;
  font-size: 11px;
}
.load-into .dlg-title {
  height: 34px;
  padding: 8px 2px 0 4px;
}
.load-into .dlg-body {
  padding: 14px 12px 0 11px;
}
.load-into p {
  line-height: 15px;
}
.checklist {
  display: grid;
  grid-template-columns: 1fr 18px;
  grid-template-rows: 1fr 20px;
  height: 283px;
  margin-top: 14px;
  padding: 1px 3px;
  border: 1px solid #888;
  background: #fff;
}
.checklist label {
  display: flex;
  align-items: center;
  gap: 3px;
  height: 19px;
}
.checklist label span {
  flex: 1;
  border: 1px solid transparent;
}
.checklist label .focused {
  border: 1px dotted #333;
}
.hscroll {
  grid-column: 1 / 3;
  display: flex;
  justify-content: space-between;
  align-items: center;
  padding: 0 26px 0 4px;
  background: #efefef;
}
.checklist .tri {
  background: #999;
}
.load-into .actions {
  justify-content: center;
  gap: 19px;
  margin-top: 12px;
}
.load-into .actions .btn {
  width: 96px;
  height: 26px;
}
```
FILE: script.js
```js
const ic = (name) => `<svg aria-hidden="true"><use href="#${name}"/></svg>`;
const tool = (name, label, cls = "") => `<button class="tool ${cls}" aria-label="${label}">${ic(name)}</button>`;
const icons = (names) => names.map((n) => `<button aria-label="${n}">${ic(n)}</button>`).join("");
const caret = `<i class="caret"></i>`;

function toolbar(d, n) {
  return `
    <div class="qat">
      <div class="qat-tools">
        ${tool("open", "Open")}${tool("save", "Save")}${tool("cube", "Sync")}${caret}
        ${tool("undo", "Undo", n === 0 ? "off" : "")}${caret}${tool("redo", "Redo")}${caret}<i class="sep"></i>
        ${tool("measure", "Measure")}${caret}${tool("dim", "Dimension")}${tool("tag", "Tag")}
        <button class="tool-a" aria-label="Text">A</button><i class="sep"></i>
        ${tool("house", "3D view")}${caret}${tool("section", "Section")}${tool("lines", "Thin lines")}
        <i class="more"></i>
      </div>
      <div class="doc-title">${d.title}</div>
      <i class="search-arrow"></i>
      <input class="search" type="search" aria-label="Search help" placeholder="Type a keyword or phrase">
      <div class="account">
        ${tool("binoculars", "Search")}${tool("key", "Subscription")}${tool("dish", "Communication")}${tool("star", "Favorites")}${tool("user", "Account")}
        <button class="sign-in">Sign In</button>${caret}${tool("exchange", "Exchange Apps")}<i class="sep"></i>${tool("help", "Help")}${caret}
        <div class="win-ctl"><i></i><i class="sq"></i>✕</div>
      </div>
    </div>
    <button class="app-btn" aria-label="Application menu">${ic("revit")}${caret}</button>
    <nav class="tabs">
      <button>Create</button><button>Insert</button><button>View</button><button>Manage</button><button>Add-Ins</button><button class="active">Modify</button>
      <button class="collapse" aria-label="Minimize ribbon"><i></i></button>${caret}
    </nav>`;
}

function ribbon() {
  return `
    <div class="ribbon">
      <div class="panel p-select"><div class="panel-body"><button class="big-modify">${ic("arrow")}Modify</button></div><h3>Select${caret}</h3></div>
      <div class="panel p-props"><div class="panel-body grid2">${icons(["famcat", "famtypes"])}<button class="pressed" aria-label="props">${ic("props")}</button>${icons(["types"])}</div><h3>Properties</h3></div>
      <div class="panel p-clip"><div class="panel-body"><button class="paste">${ic("paste")}<span>Paste</span>${caret}</button><div class="small">${icons(["cut", "copy", "match"])}</div></div><h3>Clipboard</h3></div>
      <div class="panel p-geo"><div class="panel-body geo">
        <button>${ic("cutgeo")}Cut${caret}</button><button aria-label="Cope">${ic("cope")}</button>
        <button>${ic("joingeo")}Join${caret}</button><button aria-label="Split face">${ic("split")}${caret}</button>
      </div><h3>Geometry</h3></div>
      <div class="panel p-mod"><div class="panel-body">
        <div class="grid2">${icons(["align", "offset", "mirrorpick", "mirrordraw", "move", "copyel", "rotate", "trim"])}</div>
        <div class="small">${icons(["splitel", "splitgap", "unpin", "array", "scale", "pin", "trimone", "trimmany", "delete"])}</div>
      </div><h3>Modify</h3></div>
      <div class="panel p-meas"><div class="panel-body meas"><button aria-label="Measure">${ic("tape")}${caret}</button><button aria-label="Dimension">${ic("bigdim")}${caret}</button></div><h3>Measure</h3></div>
      <div class="panel p-create"><div class="panel-body grid2">${icons(["creategroup", "similar"])}</div><h3>Create</h3></div>
      <div class="panel p-family"><div class="panel-body"><button class="load">${ic("loadproj")}<span>Load into<br>Project</span></button></div><h3>Family Editor</h3></div>
    </div>`;
}

function palette(d, n) {
  const last = d.value || `<input type="checkbox" id="last${n}">`;
  const lastLabel = d.value ? d.last : `<label for="last${n}">${d.last}</label>`;
  return `
    <aside class="palette">
      <div class="palette-head">Properties<button aria-label="Close palette">✕</button></div>
      <div class="palette-box">
        <div class="preview"><div class="thumbnail">${ic("revit-gray")}</div>${caret}</div>
        <div class="type-row">
          <span class="combo"><select aria-label="Family category"><option>${d.family}</option></select></span>
          <button class="edit-type" disabled>${ic("famcat")}Edit Type</button>
        </div>
        <table class="props">
          <tr class="group"><th colspan="2">${ic("chevrons")}Identity Data</th></tr>
          <tr><th><label for="num${n}">OmniClass Number</label></th><td class="focus"><input type="text" id="num${n}"></td></tr>
          <tr><th class="dim">OmniClass Title</th><td></td></tr>
          <tr class="group"><th colspan="2">${ic("chevrons")}Other</th></tr>
          <tr><th><label for="rot${n}">Rotate with compon...</label></th><td><input type="checkbox" id="rot${n}"></td></tr>
          <tr><th>${lastLabel}</th><td>${last}</td></tr>
        </table>
        <div class="palette-foot"><a href="#">Properties help</a><button disabled>Apply</button></div>
      </div>
      <div class="palette-tabs"><button>Properties</button><button>${d.browser}</button></div>
    </aside>`;
}

function viewbar(bar) {
  const { scale, mode } = bar.dataset;
  const plan = ["v-detail", "v-style", "v-sun", "v-shadow", "v-crop", "v-croplamp", "v-glasses"].map(ic).join("");
  const off = `<svg class="faded"><use href="#v-bulb"/></svg><svg class="faded"><use href="#v-tmp"/></svg><svg class="faded"><use href="#v-grid"/></svg>`;
  const model = ["v-sheet", "v-styleblue", "v-suncolor", "v-shadowcolor", "v-render", "v-crop", "v-croplamp", "v-lock", "v-glasses", "v-bulb", "v-tmp", "v-grid", "v-style"].map(ic).join("");
  const thumb = mode === "thumb" ? `<i class="thumb"></i>` : "";
  const right = mode === "plain" ? "" : `<i class="tri right"></i>`;
  bar.innerHTML = `<b>${scale}</b>${mode === "3d" ? model : plan + off}<div class="hbar"><i class="tri left"></i>${thumb}${right}</div>`;
}

document.querySelectorAll(".frame").forEach((frame, n) => {
  const d = frame.dataset;
  const view = frame.firstElementChild;
  const app = document.createElement("div");
  app.className = "app";
  app.innerHTML = `${toolbar(d, n)}${ribbon()}<div class="work">${palette(d, n)}</div>
    <footer class="status"><span>${d.status}</span>${ic("s-link")}${ic("s-under")}${ic("s-pin")}</footer>`;
  app.querySelector(".work").appendChild(view);
  frame.prepend(app);
  frame.insertAdjacentHTML("beforeend", `<div class="watermark"><b>lynda</b>.com</div><time class="time">${d.time}</time>`);
});

document.querySelectorAll(".viewbar").forEach(viewbar);
```
